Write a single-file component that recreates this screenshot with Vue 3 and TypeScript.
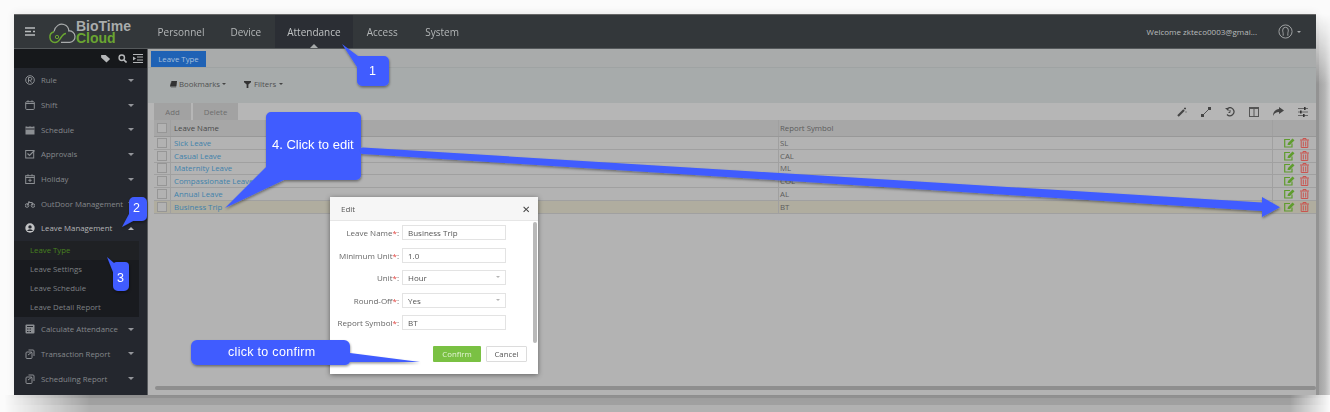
<template>
  <div class="page">
    <div class="frame">
      <header class="topbar">
        <div class="brand">
          <svg class="burger" viewBox="0 0 10 9" width="10" height="9">
            <path d="M0 1h10M0 4.500h6M8 4.500h2M0 8h10" stroke="#b9bcbd" stroke-width="1.300" fill="none" />
          </svg>
          <svg class="logo-mark" viewBox="0 0 28 22" width="28" height="22">
            <path d="M7 20.500a5.500 5.500 0 0 1-1-10.800" fill="none" stroke="#6aa531" stroke-width="1.500" />
            <path d="M6 9.500C7 4 12 1 16 2.500c3.500 1.200 4.800 4 4.800 6.500a5.700 5.700 0 0 1 1 11.400H13" fill="none" stroke="#a9acac" stroke-width="1.200" />
            <path d="M7 20.500c3 0 4-2 6-5s3-4 5-4" fill="none" stroke="#6aa531" stroke-width="1.500" />
            <circle cx="9" cy="15" r="1.700" fill="none" stroke="#6aa531" stroke-width="1" />
          </svg>
          <div class="logo-text">
            <span class="logo-top">BioTime</span>
            <span class="logo-bottom">Cloud</span>
          </div>
        </div>
        <nav class="nav">
          <a v-for="n in navItems" :key="n" class="nav-item" :class="{ active: n === 'Attendance' }">{{ n }}</a>
        </nav>
        <div class="user">
          <span>Welcome zkteco0003@gmai...</span>
          <svg viewBox="0 0 16 16" width="15" height="15">
            <circle cx="8" cy="8" r="7" fill="none" stroke="#a5a8a9" />
            <path d="M5.500 12.500V10c0-1-.5-1.500-.5-3.500a3 3 0 0 1 6 0c0 2-.5 2.500-.5 3.500v2.500" fill="none" stroke="#a5a8a9" />
          </svg>
          <i class="user-caret"></i>
        </div>
      </header>

      <div class="body">
        <aside class="sidebar">
          <div class="side-tools">
            <svg viewBox="0 0 12 10" width="11" height="9"><path d="M0 1h5l5 4.500-4 4L0 4z" fill="#b5b7b9" /></svg>
            <svg viewBox="0 0 10 10" width="9" height="9"><circle cx="4.200" cy="4.200" r="3" fill="none" stroke="#b5b7b9" stroke-width="1.600" /><path d="M6.500 6.500L9.500 9.500" stroke="#b5b7b9" stroke-width="1.800" /></svg>
            <svg viewBox="0 0 10 9" width="10" height="9"><path d="M0 .5h10M4 3h6M4 6h6M0 8.500h10" stroke="#b5b7b9" /><path d="M0 2.500v4l3-2z" fill="#b5b7b9" /></svg>
          </div>
          <template v-for="m in menu" :key="m.label">
            <div class="menu-item" :class="{ open: m.open }">
              <svg class="menu-icon" viewBox="0 0 10 10" width="10" height="10" v-html="m.icon"></svg>
              <span class="menu-label">{{ m.label }}</span>
              <i class="caret" :class="{ up: m.open }"></i>
            </div>
            <div v-if="m.open" class="submenu">
              <div v-for="(s, i) in subItems" :key="s" class="sub-item" :class="{ current: i === 0 }">{{ s }}</div>
            </div>
          </template>
        </aside>

        <main class="main">
          <div class="tabs"><span class="tab">Leave Type</span></div>
          <div class="filters">
            <span class="filter">
              <svg viewBox="0 0 8 8" width="7" height="7"><path d="M2 0h6l-1 6H0zM1 7h6" fill="#333" stroke="#333" stroke-width=".5" /></svg>
              Bookmarks<i class="mini-caret"></i>
            </span>
            <span class="filter wide">
              <svg viewBox="0 0 8 8" width="7" height="7"><path d="M0 0h8v1.500L5 4v4H3V4L0 1.500z" fill="#333" /></svg>
              Filters<i class="mini-caret"></i>
            </span>
          </div>
          <div class="actions">
            <button class="act-btn add">Add</button>
            <button class="act-btn del">Delete</button>
            <div class="tool-icons">
              <svg viewBox="0 0 10 10" width="10" height="10"><path d="M1 9L7 3" stroke="#454545" stroke-width="2.200" /><path d="M8 .5v2M7 1.500h2M9 4.500v1" stroke="#454545" /></svg>
              <svg viewBox="0 0 10 10" width="10" height="10"><path d="M2 8L8 2" stroke="#555" /><rect x="0" y="7" width="3" height="3" fill="#454545" /><rect x="7" y="0" width="3" height="3" fill="#454545" /></svg>
              <svg viewBox="0 0 10 10" width="10" height="10"><path d="M2.500 1.500A4 4 0 1 1 2 7.500" fill="none" stroke="#454545" stroke-width="1.200" /><path d="M0 1h3.500v3.200z" fill="#454545" /><path d="M5 3v2.500h-1.500" fill="none" stroke="#454545" /></svg>
              <svg viewBox="0 0 10 10" width="10" height="10"><rect x=".5" y=".5" width="9" height="9" fill="none" stroke="#555" /><path d="M5 .5v9M.5 1.500h9" stroke="#555" /></svg>
              <svg viewBox="0 0 11 9" width="11" height="9"><path d="M6 0l5 3.500L6 7V5C3 5 1.500 6 0 9c0-4 2-6.500 6-7z" fill="#454545" /></svg>
              <svg viewBox="0 0 10 10" width="10" height="10"><path d="M0 1.500h10M0 5h10M0 8.500h10" stroke="#666" /><rect x="6" y="0" width="1.600" height="3" fill="#333" /><rect x="2" y="3.500" width="1.600" height="3" fill="#333" /><rect x="5" y="7" width="1.600" height="3" fill="#333" /></svg>
            </div>
          </div>
          <div class="grid">
            <div class="row head">
              <div class="cell check"><i class="box"></i></div>
              <div class="cell name">Leave Name</div>
              <div class="cell symbol">Report Symbol</div>
              <div class="cell ops"></div>
            </div>
            <div v-for="r in rows" :key="r.name" class="row" :class="{ picked: r.name === 'Business Trip' }">
              <div class="cell check"><i class="box"></i></div>
              <div class="cell name link">{{ r.name }}</div>
              <div class="cell symbol">{{ r.symbol }}</div>
              <div class="cell ops">
                <svg viewBox="0 0 11 10" width="11" height="10">
                  <path d="M8 5.500V9H.7V1.500H6" fill="none" stroke="#5f9c2e" stroke-width="1.200" />
                  <path d="M3.500 7l.5-2L8.500.5l2 1.800L6 7z" fill="#5f9c2e" />
                </svg>
                <svg viewBox="0 0 9 10" width="9" height="10">
                  <path d="M0 2h9M3 2V.5h3V2M1.200 2.500V9.500h6.600V2.500M3.300 3.500v5M5.700 3.500v5" fill="none" stroke="#c9544f" />
                </svg>
              </div>
            </div>
          </div>
          <div class="scroll-track"><div class="scroll-thumb"></div></div>
        </main>
      </div>
    </div>

    <div class="modal">
      <div class="modal-head"><span>Edit</span><span class="close">✕</span></div>
      <div class="modal-body">
        <div class="form">
          <div v-for="f in fields" :key="f.label" class="field">
            <label>{{ f.label }}<em>*</em>:</label>
            <div class="input">
              <span>{{ f.value }}</span>
              <i v-if="f.select" class="select-caret"></i>
            </div>
          </div>
        </div>
        <div class="modal-scroll"></div>
      </div>
      <div class="modal-foot">
        <button class="btn-confirm">Confirm</button>
        <button class="btn-cancel">Cancel</button>
      </div>
    </div>

    <svg class="arrows" viewBox="0 0 1330 412" width="1330" height="412">
      <g fill="#3f5cff" filter="url(#sh)">
        <path d="M342 44L358 56H384a5 5 0 0 1 5 5V81a5 5 0 0 1-5 5H362a5 5 0 0 1-5-5V67z" />
        <path d="M122 227L129 214V202a5 5 0 0 1 5-5H142a5 5 0 0 1 5 5V216a5 5 0 0 1-5 5H133z" />
        <path d="M107 257L114 263a4 4 0 0 1 3-1H125a4 4 0 0 1 4 4V286a5 5 0 0 1-5 5H118a5 5 0 0 1-5-5V272z" />
        <path d="M225 208L266 167V117a5 5 0 0 1 5-5H356a5 5 0 0 1 5 5V175a5 5 0 0 1-5 5H284z" />
        <path d="M363 147.500L1262 202.500V197L1280 207.300L1262 217V211L363 154a3 3 0 0 1 0-6.500z" />
        <path d="M197 340H344a6 6 0 0 1 6 6V353L420 362L350 362a6 6 0 0 1-6 3H197a6 6 0 0 1-6-6V346a6 6 0 0 1 6-6z" />
      </g>
      <defs>
        <filter id="sh" x="-5%" y="-5%" width="110%" height="120%">
          <feDropShadow dx="0.500" dy="1.500" stdDeviation="1.200" flood-color="#000" flood-opacity=".4" />
        </filter>
      </defs>
    </svg>
    <span class="note n1">1</span>
    <span class="note n2">2</span>
    <span class="note n3">3</span>
    <span class="note n4">4. Click to edit</span>
    <span class="note n5">click to confirm</span>
  </div>
</template>

<script setup lang="ts">
const navItems = ["Personnel", "Device", "Attendance", "Access", "System"];

const icons = {
  circle: '<circle cx="5" cy="5" r="4.300" fill="none" stroke="#8c8f93"/><path d="M3.500 7.500v-5h2a1.300 1.300 0 0 1 0 2.800h-2M5 5.300l1.500 2.200" fill="none" stroke="#8c8f93"/>',
  cal: '<rect x=".7" y="1.700" width="8.600" height="7.800" rx="1" fill="none" stroke="#8c8f93"/><path d="M.7 3.500h8.600M3 .3v2M7 .3v2" stroke="#8c8f93"/>',
  calFill: '<rect x=".5" y="1.500" width="9" height="8" fill="#8c8f93"/><path d="M3 0v2M7 0v2M.5 4h9" stroke="#24272e"/>',
  check: '<rect x=".7" y="1.500" width="8" height="7.500" fill="none" stroke="#8c8f93"/><path d="M2.500 4.500l2 2L9.500 1.500" fill="none" stroke="#8c8f93" stroke-width="1.200"/>',
  plus: '<rect x=".7" y="1.700" width="8.600" height="7.800" fill="none" stroke="#8c8f93"/><path d="M.7 3.500h8.600M3 .3v2M7 .3v2M5 4.500v3.500M3.300 6.300h3.400" stroke="#8c8f93"/>',
  bike: '<circle cx="2" cy="6.500" r="1.800" fill="none" stroke="#8c8f93"/><circle cx="8" cy="6.500" r="1.800" fill="none" stroke="#8c8f93"/><path d="M2 6.500l2-3h3l1 3M3 3h2" fill="none" stroke="#8c8f93" stroke-width="1.200"/>',
  user: '<circle cx="5" cy="5" r="4.700" fill="#c2c3c5"/><circle cx="5" cy="3.900" r="1.700" fill="#24272e"/><path d="M2 8a3.200 2.500 0 0 1 6 0z" fill="#24272e"/>',
  calc: '<rect x=".5" y=".5" width="9" height="9" rx="1" fill="#8c8f93"/><path d="M2 2.500h6M2 5h1.500M4.500 5H6M2 7.500h1.500M4.500 7.500H6" stroke="#24272e"/>',
  report: '<rect x="1" y="3" width="6" height="6.500" rx="1" fill="none" stroke="#8c8f93"/><path d="M3.500 1h4.500a1 1 0 0 1 1 1v5M3 6l4-3" fill="none" stroke="#8c8f93"/>',
};

const menu = [
  { label: "Rule", icon: icons.circle },
  { label: "Shift", icon: icons.cal },
  { label: "Schedule", icon: icons.calFill },
  { label: "Approvals", icon: icons.check },
  { label: "Holiday", icon: icons.plus },
  { label: "OutDoor Management", icon: icons.bike },
  { label: "Leave Management", icon: icons.user, open: true },
  { label: "Calculate Attendance", icon: icons.calc },
  { label: "Transaction Report", icon: icons.report },
  { label: "Scheduling Report", icon: icons.report },
];

const subItems = ["Leave Type", "Leave Settings", "Leave Schedule", "Leave Detail Report"];

const rows = [
  { name: "Sick Leave", symbol: "SL" },
  { name: "Casual Leave", symbol: "CAL" },
  { name: "Maternity Leave", symbol: "ML" },
  { name: "Compassionate Leave", symbol: "COL" },
  { name: "Annual Leave", symbol: "AL" },
  { name: "Business Trip", symbol: "BT" },
];

const fields = [
  { label: "Leave Name", value: "Business Trip" },
  { label: "Minimum Unit", value: "1.0" },
  { label: "Unit", value: "Hour", select: true },
  { label: "Round-Off", value: "Yes", select: true },
  { label: "Report Symbol", value: "BT" },
];
</script>

<style>
html,
body {
  margin: 0;
  background: #fff;
}
</style>

<style scoped>
.page {
  position: relative;
  width: 1330px;
  height: 412px;
  overflow: hidden;
  padding: 14px 14px 0;
  box-sizing: border-box;
  background: #fbfbfb;
  font-family: "Open Sans", "Liberation Sans", sans-serif;
}

/* soft picture shadow, heavier along the bottom and right */
.page::before {
  content: "";
  position: absolute;
  left: 0;
  right: 0;
  top: 395px;
  bottom: 0;
  background: linear-gradient(#939393 0 3px, #a0a0a0 3px 10px, #b1b1b1 10px);
  -webkit-mask-image: linear-gradient(90deg, transparent 4px, #000 90px, #000 1290px, transparent 1330px);
  mask-image: linear-gradient(90deg, transparent 4px, #000 90px, #000 1290px, transparent 1330px);
}

.page::after {
  content: "";
  position: absolute;
  left: 1316px;
  right: 0;
  top: 14px;
  bottom: 17px;
  background: linear-gradient(90deg, #939393 0 3px, #a3a3a3 3px, #b5b5b5 9px, #d5d5d5 14px);
  -webkit-mask-image: linear-gradient(transparent, #000 70px);
  mask-image: linear-gradient(transparent, #000 70px);
}

.frame {
  display: flex;
  flex-direction: column;
  height: 381px;
  box-shadow: 0 -1px 8px rgba(0, 0, 0, 0.08);
  filter: blur(0.5px);
}

.topbar {
  display: flex;
  align-items: stretch;
  height: 35px;
  flex: none;
  background: #33373a;
  border-top: 1px solid #666;
  box-sizing: border-box;
  border-bottom: 1px solid #55595b;
}

.brand {
  display: flex;
  align-items: center;
  width: 131px;
  flex: none;
  padding-left: 11px;
  box-sizing: border-box;
}

.logo-mark {
  margin-left: 13px;
  margin-top: 3px;
}

.logo-text {
  display: flex;
  flex-direction: column;
  font-family: "Liberation Sans", sans-serif;
  font-weight: 700;
  font-size: 14px;
  line-height: 12px;
}

.logo-top {
  color: #a9acac;
}

.logo-bottom {
  color: #6aa531;
}

.nav {
  display: flex;
}

.nav-item {
  position: relative;
  display: flex;
  align-items: center;
  padding: 0 12.500px;
  margin-right: 1px;
  color: #b4b7b8;
  font-size: 10px;
}

.nav-item:last-child {
  margin-left: 1.500px;
}

.nav-item.active {
  background: #2b2e34;
  color: #c0c3c4;
}

.nav-item.active::after {
  content: "";
  position: absolute;
  left: 50%;
  bottom: 0;
  margin-left: -4px;
  border: 4px solid transparent;
  border-top: 0;
  border-bottom-color: #a8abab;
}

.user {
  display: flex;
  align-items: center;
  margin-left: auto;
  padding-right: 15px;
  color: #b9bcbd;
  font-size: 8px;
}

.user svg {
  margin-left: 21px;
}

.user-caret {
  margin-left: 4px;
  border: 2.500px solid transparent;
  border-top-color: #a5a8a9;
  border-bottom: 0;
}

.body {
  display: flex;
  flex: 1;
  min-height: 0;
}

.sidebar {
  width: 133px;
  flex: none;
  background: #24272e;
  border-right: 1px solid #5a5c5f;
}

.side-tools {
  display: flex;
  align-items: center;
  justify-content: flex-end;
  gap: 6px;
  height: 19px;
  padding-right: 4px;
  background: #16181b;
}

.menu-item {
  display: flex;
  align-items: center;
  height: 24.700px;
  padding: 0 13px 0 11px;
  color: #85888c;
  font-size: 7.800px;
}

.menu-item.open {
  color: #b5b6b8;
}

.menu-label {
  margin-left: 6px;
  white-space: nowrap;
}

.caret {
  margin-left: auto;
  border: 3px solid transparent;
  border-top-color: #93959a;
  border-bottom: 0;
}

.caret.up {
  border-top: 0;
  border-bottom: 3px solid #b5b6b8;
}

.submenu {
  width: 125px;
  background: #191b1f;
}

.sub-item {
  display: flex;
  align-items: center;
  height: 19px;
  padding-left: 16px;
  color: #7e8185;
  font-size: 7.800px;
}

.sub-item.current {
  background: #1f2124;
  color: #47821f;
}

.main {
  display: flex;
  flex-direction: column;
  flex: 1;
  min-width: 0;
  background: #b3b3b3;
  color: #4a4a4a;
}

.tabs {
  display: flex;
  align-items: flex-end;
  height: 19px;
  flex: none;
  padding-left: 3px;
  box-sizing: border-box;
  background: #a9abab;
  border-bottom: 1px solid #9fa3a3;
}

.tab {
  display: flex;
  align-items: center;
  justify-content: center;
  width: 55px;
  height: 16px;
  background: #1f62b5;
  color: #a8c0dc;
  font-size: 7.800px;
}

.filters {
  display: flex;
  align-items: center;
  gap: 18px;
  height: 35px;
  flex: none;
  padding: 0 0 3px 22px;
  box-sizing: border-box;
  background: #a7abab;
  font-size: 7.800px;
  color: #4f5050;
}

.filter {
  display: inline-flex;
  align-items: center;
  gap: 2px;
}

.filter.wide {
  gap: 3px;
}

.mini-caret {
  border: 2px solid transparent;
  border-top-color: #444;
  border-bottom: 0;
}

.actions {
  display: flex;
  align-items: stretch;
  height: 17px;
  flex: none;
  padding-left: 6px;
  background: #b6b6b6;
}

.act-btn {
  margin: 0 2px 0 0;
  padding: 0;
  border: 0;
  background: #a2a2a2;
  color: #6d6d6d;
  font: inherit;
  font-size: 7.800px;
}

.add {
  width: 37px;
}

.del {
  width: 45px;
}

.tool-icons {
  display: flex;
  align-items: center;
  margin-left: auto;
  padding-right: 8px;
  gap: 14px;
}

.grid {
  margin-left: 6px;
  font-size: 7.800px;
}

.row {
  display: flex;
  height: 12.800px;
  border-bottom: 1px solid #a0a0a0;
  box-sizing: border-box;
  background: #b3b3b3;
}

.row.head {
  height: 17px;
  background: #a7a7a7;
  border-bottom-color: #989898;
}

.row.picked {
  background: #b0ad9f;
}

.cell {
  display: flex;
  align-items: center;
  box-sizing: border-box;
  white-space: nowrap;
}

.check {
  width: 17px;
  flex: none;
  padding-left: 3px;
  border-right: 1px solid #a0a0a0;
}

.box {
  display: block;
  width: 8px;
  height: 8px;
  background: #b2b2b2;
  border: 1px solid #969696;
}

.name {
  width: 607px;
  flex: none;
  padding-left: 3px;
}

.link {
  color: #3f82ab;
}

.symbol {
  width: 494px;
  flex: none;
  padding-left: 1px;
  border-left: 1px solid #a0a0a0;
  color: #5c5c5c;
}

.ops {
  flex: 1;
  gap: 5px;
  padding-left: 11px;
  border-left: 1px solid #a0a0a0;
}

.scroll-track {
  margin-top: auto;
  margin-bottom: 5px;
  margin-left: 7px;
  height: 4px;
  flex: none;
}

.scroll-thumb {
  height: 100%;
  border-radius: 2px;
  background: #8e8e8e;
}

.modal {
  position: absolute;
  left: 330px;
  top: 197px;
  display: flex;
  flex-direction: column;
  width: 208px;
  height: 177px;
  background: #fff;
  box-shadow: 0 1px 5px rgba(0, 0, 0, 0.45);
  filter: blur(0.5px);
  color: #5a5a5a;
  font-size: 8px;
}

.modal-head {
  display: flex;
  align-items: center;
  justify-content: space-between;
  height: 24px;
  flex: none;
  padding: 0 8px 0 11px;
  box-sizing: border-box;
  background: #f6f6f6;
  border-bottom: 1px solid #e6e6e6;
}

.close {
  color: #444;
  font-size: 10px;
}

.modal-body {
  position: relative;
  flex: 1;
}

.form {
  display: flex;
  flex-direction: column;
  gap: 7.500px;
  padding-top: 4px;
}

.field {
  display: flex;
  align-items: center;
  height: 15px;
}

.field label {
  width: 69px;
  flex: none;
  margin-right: 3px;
  text-align: right;
  white-space: nowrap;
  color: #666;
}

.field em {
  color: #e2433f;
  font-style: normal;
}

.input {
  position: relative;
  display: flex;
  align-items: center;
  width: 104px;
  height: 15px;
  padding-left: 5px;
  box-sizing: border-box;
  border: 1px solid #e3e3e3;
  color: #555;
}

.select-caret {
  position: absolute;
  right: 5px;
  top: 5px;
  border: 2.500px solid transparent;
  border-top-color: #b5b5b5;
  border-bottom: 0;
}

.modal-scroll {
  position: absolute;
  right: 1px;
  top: 1px;
  width: 4px;
  height: 121px;
  border-radius: 2px;
  background: #b9b9b9;
}

.modal-foot {
  display: flex;
  justify-content: flex-end;
  gap: 5px;
  height: 28px;
  flex: none;
  padding-right: 11px;
  box-sizing: border-box;
}

.modal-foot button {
  height: 16px;
  padding: 0;
  border-radius: 1px;
  font: inherit;
  font-size: 7.800px;
}

.btn-confirm {
  width: 48px;
  border: 0;
  background: #7ac143;
  color: #e4f4d6;
}

.btn-cancel {
  width: 41px;
  border: 1px solid #dcdcdc;
  background: #fff;
  color: #555;
}

.arrows {
  position: absolute;
  left: 0;
  top: 0;
  filter: blur(0.3px);
}

.note {
  position: absolute;
  color: #fff;
  font-family: "Liberation Sans", sans-serif;
  font-size: 12.500px;
  white-space: nowrap;
  line-height: 14px;
}

.n1 {
  left: 369px;
  top: 64px;
}

.n2 {
  left: 133px;
  top: 201px;
}

.n3 {
  left: 117px;
  top: 271px;
}

.n4 {
  left: 272px;
  top: 138px;
  font-size: 13px;
}

.n5 {
  left: 228px;
  top: 345px;
  letter-spacing: 0.300px;
}
</style>
